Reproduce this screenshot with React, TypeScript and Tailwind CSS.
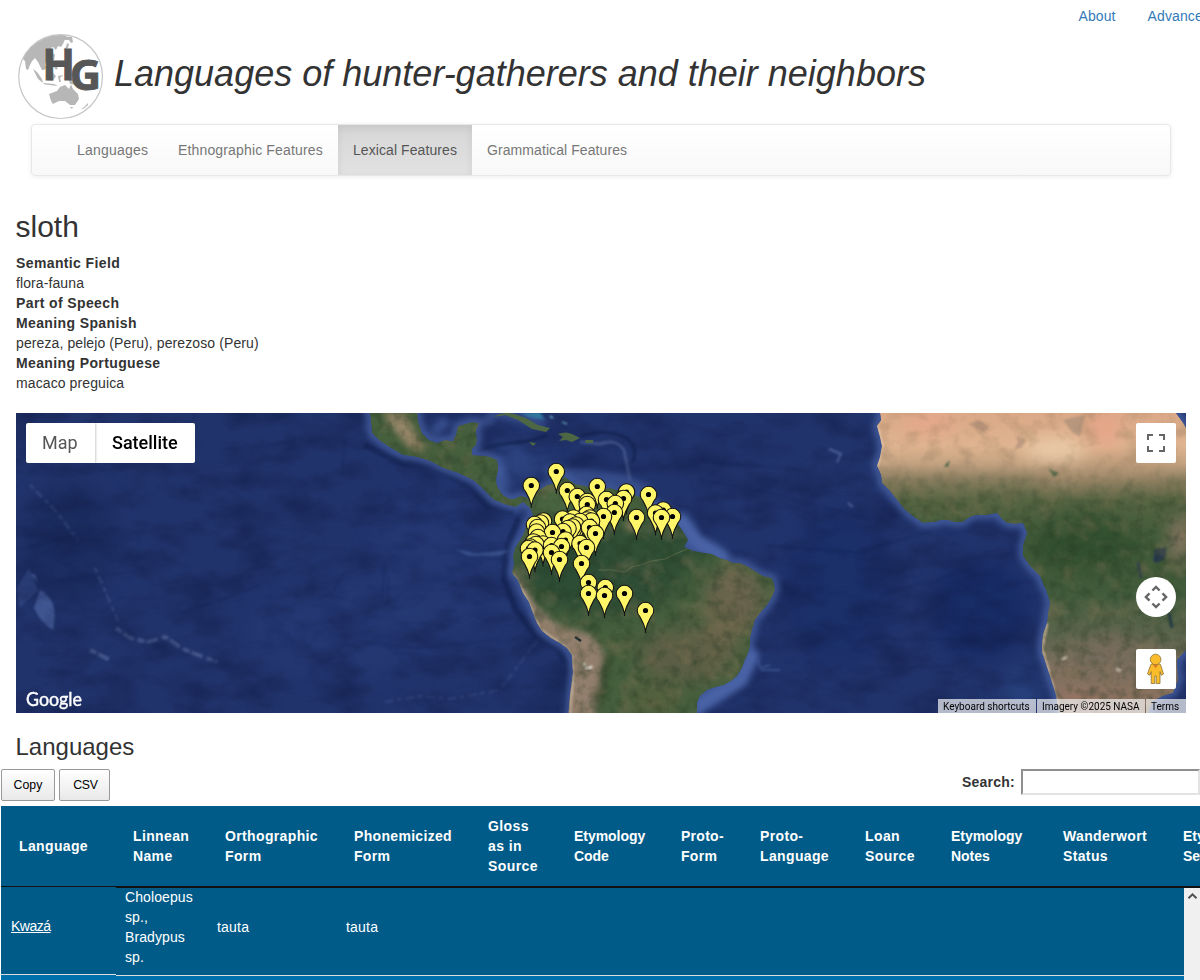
import React from "react";

const AMERICA =
  "M366 405 L370 413 L372 433 L380 441 L391 448 L403 455 L417 457 L430 461 L443 468 L458 473 L473 480 L481 487 L487 493 L494 500 L507 505 L516 507 L523 502 L530 508 L533 515 L527 523 L524 533 L520 540 L515 548 L513 556 L514 564 L512 573 L518 580 L523 593 L529 602 L533 613 L537 623 L542 631 L551 638 L560 643 L567 648 L572 655 L573 673 L570 695 L568 720 L697 720 L697 703 L700 696 L707 690 L716 687 L724 685 L731 681 L737 676 L742 668 L745 660 L749 651 L750 646 L750 638 L752 630 L755 620 L760 613 L767 605 L772 597 L775 590 L774 583 L772 578 L763 576 L755 571 L747 566 L740 563 L733 563 L727 560 L720 558 L712 554 L704 553 L693 551 L684 547 L688 540 L684 533 L677 523 L671 515 L665 510 L656 505 L647 503 L640 497 L630 493 L620 491 L610 488 L600 489 L590 487 L575 484 L565 477 L557 480 L552 484 L547 485 L541 489 L537 490 L535 496 L531 501 L526 497 L520 496 L514 499 L510 499 L503 495 L500 491 L497 486 L496 479 L498 471 L498 465 L497 460 L491 457 L485 456 L472 455 L472 449 L476 445 L477 440 L476 431 L479 423 L472 422 L458 426 L456 434 L453 441 L445 440 L437 443 L429 440 L422 433 L418 421 L417 405 Z";
const AFRICA =
  "M882 405 L880 413 L881 420 L877 426 L880 437 L882 446 L880 457 L877 466 L881 475 L882 483 L890 491 L897 500 L905 510 L914 517 L923 523 L935 522 L941 520 L947 520 L954 522 L963 522 L970 517 L977 515 L987 515 L997 513 L1002 519 L1007 523 L1015 524 L1023 523 L1027 533 L1023 545 L1023 556 L1030 566 L1040 576 L1043 584 L1046 590 L1048 596 L1050 603 L1048 613 L1047 623 L1043 634 L1042 645 L1042 652 L1046 664 L1050 676 L1056 695 L1060 720 L1146 720 L1153 701 L1163 696 L1173 693 L1178 680 L1177 660 L1190 646 L1190 436 L1184 424 L1176 413 L1172 405 Z";
const ISLANDS =
  "M494 417 Q503 411 514 414 L526 418 L538 425 L550 428 L546 432 L532 429 L518 420 L505 415 Z M558 434 Q566 431 572 434 L580 438 L572 442 L566 440 L559 441 L563 437 Z M529 442 L536 443 L533 446 Z M585 440 L593 440 L593 443 L586 443 Z";

const PINS: [number, number][] = [
  [531.3, 485.5], [556.3, 471.5], [567.3, 490.5], [577.3, 496.5], [587.3, 501.5], [587.3, 504.5],
  [597.3, 486.5], [606.5, 499.5], [626.5, 492], [623.5, 498.5], [615.3, 503.5], [614.3, 512.5],
  [603.5, 516.5], [648.5, 494.5], [636.5, 517.5], [663.3, 510], [655.5, 513], [672.5, 516.5],
  [661.5, 517.5], [562.5, 519], [543.5, 521], [534.5, 524.5], [540.5, 523], [537.5, 527.5],
  [573.5, 518], [536.5, 532], [570, 522], [580, 521.5], [586.5, 514.5], [590, 518],
  [591.5, 521], [587, 520], [572.5, 527], [576, 525], [568, 528.5], [563, 531.5], [552.5, 532.5],
  [589.5, 527.5], [595.5, 533.5], [538, 537.5], [533.5, 542], [543, 544], [536, 544.5],
  [530, 547], [528.5, 548.5], [535, 550], [529.5, 556.5], [551.5, 545.5], [565.5, 540],
  [561.5, 546.5], [551.5, 552.5], [559.5, 559.5], [580, 543.5], [586.5, 547.5],
  [581.5, 563.5], [588.5, 582.5], [588.5, 593.5], [605.3, 587.5], [604.5, 595.5], [624.5, 593.5],
  [645.5, 610.5],
];

function Logo() {
  return (
    <svg className="ml-[18px] mt-[1px] h-[86px] w-[86px] shrink-0" viewBox="18 34 86 86">
      <defs>
        <clipPath id="globe"><circle cx="60.6" cy="76.6" r="41.6" /></clipPath>
      </defs>
      <circle cx="60.6" cy="76.6" r="41.9" fill="#fff" stroke="#c6c6c6" strokeWidth="1.2" />
      <g clipPath="url(#globe)" fill="#b7b7b7">
        <path d="M18 30 L66 30 L66 37 L63 44 L61 47 L58 46 L56 50 L53 47 L51 48 L52 52 L55 55 L54 60 L50 62 L46 62 L45 65 L46 68 L44 70 L42 70 L40 66 L38 62 L35 58 L32 61 L30 65 L28 70 L26 69 L25 61 L22 58 Z" />
        <path d="M62 36 L72 37 L73 42 L71 43 L69 40 L65 40 Z M67 43 L69 44 L68 48 L63 50 L66 47 Z" />
        <path d="M33 69 L37 72 L42 79 L43 83 L38 79 L35 73 Z M43 83 L54 84 L58 86 L45 84.5 Z M46 75 L52 72 L56 76 L53 81 L47 80 Z M58 76 L63 75 L60 78 L61 82 L59 82 Z M68 77 L76 81 L81 86 L83 89 L76 85 L70 84 Z M54 61 L55 65 L58 68 L56 70 L53 66 Z" />
        <path d="M49 94 L57 91 L60 87 L65 85 L69 89 L71 84.5 L73 89 L78 94 L79 99 L75 105 L70 105 L65 101 L59 101 L53 104 L51 101 Z M70 107 L73 107 L72 109 Z" />
        <path d="M81 109 L85 106.5 L87.5 103 L88 105 L84 108.5 Z" />
      </g>
      <g fill="#575757" stroke="#575757" strokeWidth="0.9" fontFamily="Open Sans, sans-serif" fontWeight="700">
        <text x="42.2" y="79.6" fontSize="42.5" textLength="33" lengthAdjust="spacingAndGlyphs">H</text>
        <text x="69.8" y="90.2" fontSize="41.5" textLength="31.5" lengthAdjust="spacingAndGlyphs">G</text>
      </g>
    </svg>
  );
}

function Pin({ x, y }: { x: number; y: number }) {
  return (
    <g transform={`translate(${x} ${y})`}>
      <path d="M0 22.5 L0 20 C-1.2 13.5 -3.2 10.4 -5.6 6.2 A8.3 8.3 0 1 1 5.6 6.2 C3.2 10.4 1.2 13.5 0 20" fill="#fff568" stroke="#111" strokeWidth="1.1" />
      <circle r="2.6" fill="#000" />
    </g>
  );
}

function Terrain() {
  return (
    <svg className="block h-[300px] w-[1170px]" viewBox="16 413 1170 300">
      <defs>
        <filter id="b3" x="-30%" y="-30%" width="160%" height="160%" colorInterpolationFilters="sRGB"><feGaussianBlur stdDeviation="3" /></filter>
        <filter id="b9" x="-50%" y="-50%" width="200%" height="200%" colorInterpolationFilters="sRGB"><feGaussianBlur stdDeviation="9" /></filter>
        <filter id="b1" x="-30%" y="-30%" width="160%" height="160%" colorInterpolationFilters="sRGB"><feGaussianBlur stdDeviation="1.2" /></filter>
        <filter id="seaNoise" x="0" y="0" width="100%" height="100%" colorInterpolationFilters="sRGB">
          <feTurbulence type="fractalNoise" baseFrequency="0.022 0.04" numOctaves="6" seed="8" />
          <feColorMatrix values="0 0 0 0 0.06  0 0 0 0 0.10  0 0 0 0 0.26  2 0 0 0 -0.8" />
        </filter>
        <filter id="landNoise" x="0" y="0" width="100%" height="100%" colorInterpolationFilters="sRGB">
          <feTurbulence type="fractalNoise" baseFrequency="0.09" numOctaves="5" seed="3" />
          <feColorMatrix values="0 0 0 0 0.14  0 0 0 0 0.22  0 0 0 0 0.13  2.2 0 0 0 -0.95" />
        </filter>
        <filter id="sandNoise" x="0" y="0" width="100%" height="100%" colorInterpolationFilters="sRGB">
          <feTurbulence type="fractalNoise" baseFrequency="0.05" numOctaves="5" seed="14" />
          <feColorMatrix values="0 0 0 0 0.55  0 0 0 0 0.47  0 0 0 0 0.36  0 2 0 0 -0.95" />
        </filter>
        <clipPath id="am"><path d={AMERICA} /></clipPath>
        <clipPath id="af"><path d={AFRICA} /></clipPath>
        <clipPath id="land"><path d={AMERICA + AFRICA} /></clipPath>
        <linearGradient id="fade" x1="0" y1="460" x2="0" y2="510" gradientUnits="userSpaceOnUse">
          <stop offset="0" stopColor="#000" />
          <stop offset="1" stopColor="#fff" />
        </linearGradient>
        <mask id="vegetation" maskUnits="userSpaceOnUse" x="360" y="413" width="830" height="300">
          <rect x="360" y="413" width="500" height="300" fill="#fff" />
          <rect x="860" y="413" width="330" height="300" fill="url(#fade)" />
        </mask>
        <linearGradient id="afg" x1="0" y1="413" x2="0" y2="713" gradientUnits="userSpaceOnUse">
          <stop offset="0" stopColor="#dba987" />
          <stop offset=".11" stopColor="#dfb490" />
          <stop offset=".17" stopColor="#c3a281" />
          <stop offset=".22" stopColor="#8a7e60" />
          <stop offset=".29" stopColor="#566543" />
          <stop offset=".42" stopColor="#3f5a38" />
          <stop offset=".6" stopColor="#425c3b" />
          <stop offset=".74" stopColor="#5b654c" />
          <stop offset=".84" stopColor="#7d6f5e" />
          <stop offset="1" stopColor="#917462" />
        </linearGradient>
      </defs>
      <rect x="16" y="413" width="1170" height="300" fill="#21336b" />
      <g filter="url(#b9)">
        <ellipse cx="460" cy="560" rx="90" ry="70" fill="#263b76" opacity=".6" />
        <ellipse cx="340" cy="630" rx="90" ry="50" fill="#263b76" opacity=".6" />
        <ellipse cx="70" cy="540" rx="50" ry="60" fill="#1a2b5c" opacity=".7" />
        <ellipse cx="840" cy="590" rx="55" ry="80" fill="#1a2d66" opacity=".7" />
        <ellipse cx="980" cy="610" rx="50" ry="50" fill="#172a64" opacity=".8" />
        <ellipse cx="1025" cy="690" rx="22" ry="22" fill="#2b4684" opacity=".7" />
        <ellipse cx="560" cy="690" rx="25" ry="30" fill="#1d2f62" opacity=".7" />
        <ellipse cx="520" cy="460" rx="25" ry="20" fill="#344d8e" opacity=".6" />
      </g>
      <g filter="url(#b1)" fill="none">
        <path d="M365 445 L400 462 L432 467 L470 486 L488 506 L514 512 M519 518 L508 545 L504 580 L516 610 L537 636 L559 650 L567 665 L565 713" stroke="#142452" strokeWidth="6" opacity=".7" />
        <path d="M477 452 Q495 444 512 443 T548 435 M580 436 Q605 429 622 436 T633 462" stroke="#101f4a" strokeWidth="3" opacity=".6" />
        <path d="M580 442 L600 444 Q616 438 624 450 L630 480" stroke="#6d82ac" strokeWidth="3" opacity=".4" />
        <path d="M30 485 L55 510 L78 540 M95 568 L118 621" stroke="#7389bb" strokeWidth="2.5" strokeDasharray="5 3 9 4" opacity=".25" />
        <path d="M116 628 L130 638 L148 642 L165 637 L185 650 L217 662 M90 650 L110 660" stroke="#8498c4" strokeWidth="4" strokeDasharray="7 2 12 4" opacity=".35" />
        <path d="M31 575 Q35 570 38 583 M40 590 Q60 600 53 630 Q40 622 34 608 Z" fill="#5069a6" opacity=".65" />
        <path d="M16 590 L29 568 L38 590 L20 608 Z" fill="#465e9d" opacity=".4" />
        <path d="M455 549 L475 553 L510 550 L500 556 L468 556 Z" fill="#4a67a4" opacity=".55" />
        <path d="M16 550 L90 532 M55 580 L150 570 M180 614 L260 586 M320 598 L332 593 L345 572 M388 577 L388 604 M220 450 L294 442 M345 438 L342 475 M360 642 L420 648 L500 640 M385 560 L382 600 M700 480 L780 495 L870 520 M690 460 L800 470 M760 545 L860 553 L900 540 M860 550 L930 532 M880 595 L970 570 M870 638 L980 640 M870 670 L960 665" stroke="#0e1c48" strokeWidth="1.2" opacity=".35" />
        <path d="M520 413 L540 412 L545 420 L530 418 Z" fill="#2b7c9c" />
        <path d="M550 416 L553 418 M562 422 L567 424" stroke="#7cc5d1" strokeWidth="1.6" />
        <path d="M829 449 L841 454 L837 462 M848 503 L853 507" stroke="#7189ba" strokeWidth="2.5" opacity=".45" />
        <path d="M758 660 L760 668 L770 665 M760 670 L780 670" stroke="#5876b5" strokeWidth="2" opacity=".4" />
        <path d="M538 640 L515 670 L500 690 M385 702 L420 696 L450 699 L500 690" stroke="#5a70a6" strokeWidth="2.5" strokeDasharray="9 3 5 4" opacity=".25" />
      </g>
      <rect x="16" y="413" width="1170" height="300" filter="url(#seaNoise)" opacity=".5" />
      <g filter="url(#b3)" fill="none" stroke="#4963a6" strokeLinejoin="round">
        <path d={AMERICA} strokeWidth="9" opacity=".75" />
        <path d={AFRICA} strokeWidth="9" opacity=".8" />
        <path d="M682 520 L697 541 L722 556 M700 706 L722 692 L741 680 L752 656" strokeWidth="14" strokeLinecap="round" />
        <path d="M433 433 L447 420 M485 425 L495 412 L545 424 M545 470 L625 480 L650 492 M500 465 L507 488" strokeWidth="10" opacity=".55" />
      </g>

      <g clipPath="url(#am)">
        <path d={AMERICA} fill="#465f3d" />
        <g filter="url(#b9)">
          <ellipse cx="600" cy="570" rx="85" ry="45" fill="#2e4d35" />
          <ellipse cx="660" cy="545" rx="50" ry="28" fill="#304f35" />
          <ellipse cx="735" cy="600" rx="30" ry="33" fill="#6a644d" />
          <ellipse cx="685" cy="655" rx="48" ry="28" fill="#5c5f45" />
          <ellipse cx="722" cy="635" rx="18" ry="30" fill="#666349" />
          <ellipse cx="655" cy="700" rx="25" ry="18" fill="#54613f" />
          <ellipse cx="560" cy="500" rx="25" ry="12" fill="#4a6742" />
        </g>
        <g filter="url(#b3)">
          <path d="M508 565 L520 578 L538 608 L560 626 L592 635 L607 658 L600 685 L597 720 L560 720 L565 660 L520 610 Z" fill="#927f6d" />
          <path d="M385 413 L405 413 L414 430 L424 448 L415 452 L395 432 Z" fill="#948568" />
          <ellipse cx="630" cy="526" rx="5" ry="6" fill="#7e7556" />
          <path d="M604 655 L612 655 L603 705 L594 715 Z" fill="#3b4e31" />
        </g>
        <path d="M513 575 L525 596 L540 629 L560 643 L572 655 L573 680 L570 713" stroke="#cdbba7" strokeWidth="2" fill="none" filter="url(#b1)" />
        <path d="M583 663 l3 2 M585 668 l5 0 l2 -2" stroke="#e9e4dd" strokeWidth="2.5" filter="url(#b1)" />
        <path d="M575 637 l6 4" stroke="#1f2d33" strokeWidth="2.2" />
        <path d="M598 570 L612 570 L625 572 L632 567 L640 565 L652 561 L665 559 L673 555 L680 552 L692 547" stroke="#75805c" strokeWidth="1.1" fill="none" opacity=".55" />
      </g>
      <path d={ISLANDS} fill="#4d6643" />

      <g clipPath="url(#af)">
        <path d={AFRICA} fill="url(#afg)" />
        <g filter="url(#b9)">
          <path d="M910 413 L960 413 L950 432 L905 435 Z" fill="#e5a88a" />
          <path d="M1085 413 L1120 413 L1115 450 L1085 440 Z" fill="#e8a487" opacity=".8" />
          <ellipse cx="1055" cy="450" rx="32" ry="11" fill="#ebccab" />
          <ellipse cx="1085" cy="545" rx="52" ry="27" fill="#32502f" />
          <ellipse cx="1110" cy="655" rx="35" ry="20" fill="#776c5d" />
          <ellipse cx="1180" cy="540" rx="10" ry="24" fill="#937a69" />
          <path d="M1030 473 L1170 450 L1165 475 L1050 486 Z" fill="#b79675" opacity=".6" />
          <ellipse cx="1085" cy="706" rx="25" ry="10" fill="#a1776a" />
        </g>
        <g filter="url(#b1)">
          <path d="M1063 420 L1075 417 L1085 415 L1080 437 L1072 432 Z" fill="#9f8875" opacity=".6" />
          <path d="M1016 436 L1026 440 L1022 447 L1014 450 L1018 442 Z M968 424 L980 420 L990 428 L983 432 Z" fill="#a28372" opacity=".55" />
          <path d="M1048 468 L1053 471 L1059 473 L1054 477 Z M944 466 L950 460 L948 467 Z" fill="#4a6546" />
          <path d="M1155 549 L1166 548 L1165 559 L1156 563 L1153 560 Z" fill="#24374c" />
          <path d="M1138 562 L1141 578 M1169 613 L1172 628" stroke="#1e3448" strokeWidth="2.6" />
          <path d="M1062 659 l5 -2 M1116 669 l5 2" stroke="#dcd4c8" strokeWidth="2.2" />
          <path d="M1047 623 L1042 648 L1050 676 L1060 713" stroke="#d3b79e" strokeWidth="2.5" fill="none" />
          <path d="M877 423 L882 446 L877 466" stroke="#eccbab" strokeWidth="2.5" fill="none" />
        </g>
      </g>
      <g clipPath="url(#land)">
        <g mask="url(#vegetation)">
          <rect x="360" y="413" width="830" height="300" filter="url(#landNoise)" opacity=".42" />
        </g>
        <rect x="360" y="413" width="830" height="300" filter="url(#sandNoise)" opacity=".45" />
      </g>
      {[...PINS].sort((a, b) => a[1] - b[1]).map(([x, y], i) => <Pin key={i} x={x} y={y} />)}
      <text x="26" y="705.5" fill="#fff" stroke="#fff" strokeWidth=".4" fontFamily="Lato, sans-serif" fontSize="18.5" textLength="56" lengthAdjust="spacingAndGlyphs">Google</text>
    </svg>
  );
}

function MapPanel() {
  return (
    <div className="relative ml-4 mt-5 h-[300px] w-[1170px] overflow-hidden tracking-normal">
      <Terrain />
      <div className="absolute left-[10px] top-[10px] flex h-10 overflow-hidden rounded-[2px] bg-white font-[Roboto,sans-serif] text-[18px] leading-10">
        <div className="w-[69px] pl-[16px] text-[#565656] shadow-[1px_0_2px_rgba(0,0,0,0.2)]">Map</div>
        <div className="w-[100px] pl-[17px] font-medium text-black">Satellite</div>
      </div>
      <div className="absolute right-[10px] top-[10px] h-10 w-10 rounded-[2px] bg-white p-[11px]">
        <svg className="block" width="18" height="18" fill="none" stroke="#666" strokeWidth="2"><path d="M1 6V1H6M12 1H17V6M17 12V17H12M6 17H1V12" /></svg>
      </div>
      <div className="absolute right-[10px] top-[164px] h-10 w-10 rounded-full bg-white">
        <svg className="block" width="40" height="40" fill="none" stroke="#666" strokeWidth="2.4"><path d="M16.4 13.5 20 9.9l3.6 3.6M16.4 26.5 20 30.1l3.6-3.6M13.5 16.4 9.9 20l3.6 3.6M26.5 16.4 30.1 20l-3.6 3.6" /></svg>
      </div>
      <div className="absolute right-[10px] top-[236px] h-10 w-10 rounded-[2px] bg-white">
        <svg className="block" width="40" height="40" fill="#fbbc2b" stroke="#8a7137" strokeWidth=".8">
          <path d="M14.8 15.5 Q16 14.7 19.5 14.7 Q23 14.7 24.5 15.5 L27.5 25 L25.3 26.2 L24 22.5 V34.5 H20.2 V27 H18.8 V34.5 H15.2 V22.5 L14 26.2 L11.5 25 Z" />
          <path d="M16.7 15 H22.5 L19.6 19.5Z" fill="#e17a26" stroke="none" />
          <circle cx="19.6" cy="10.5" r="5.3" />
        </svg>
      </div>
      <div className="absolute bottom-0 right-0 flex h-[14px] gap-px font-[Roboto,sans-serif] text-[10px] leading-[15px] text-black">
        <span className="w-[98px] whitespace-nowrap bg-[#f5f5f5]/70 pl-[5px]">Keyboard shortcuts</span>
        <span className="w-[108px] whitespace-nowrap bg-[#f5f5f5]/70 pl-[5px]">Imagery ©2025 NASA</span>
        <span className="w-[40px] whitespace-nowrap bg-[#f5f5f5]/70 pl-[5px]">Terms</span>
      </div>
    </div>
  );
}

function Field({ label, value }: { label: string; value?: string }) {
  return (
    <>
      <dt className="font-bold tracking-[0.38px]">{label}</dt>
      {value && <dd>{value}</dd>}
    </>
  );
}

const HEADERS = [
  ["w-[115px] tracking-[0.36px]", "Language"], ["w-[92px] tracking-[0.36px]", "Linnean\nName"], ["w-[129px] tracking-[0.36px]", "Orthographic\nForm"],
  ["w-[134px] tracking-[0.32px]", "Phonemicized\nForm"], ["w-[86px] tracking-[0.4px]", "Gloss\nas in\nSource"], ["w-[107px] tracking-[-0.05px]", "Etymology\nCode"],
  ["w-[79px] tracking-[0.28px]", "Proto-\nForm"], ["w-[105px] tracking-[0.36px]", "Proto-\nLanguage"], ["w-[86px] tracking-[0.4px]", "Loan\nSource"],
  ["w-[112px] tracking-[-0.05px]", "Etymology\nNotes"], ["w-[120px] tracking-[0.36px]", "Wanderwort\nStatus"], ["w-[110px] tracking-[-0.05px]", "Etymology\nSet"],
];

function LanguageTable() {
  return (
    <div className="ml-px mt-[5px] w-[1199px] overflow-hidden text-white">
      <div className="flex h-[80px] w-[1300px] bg-[#005b88] font-bold">
        {HEADERS.map(([w, t], i) => (
          <div key={i} className={`${w} flex shrink-0 items-center whitespace-pre ${i ? "pl-[17px]" : "pl-[18px]"}`}>{t}</div>
        ))}
      </div>
      <div className="flex h-[94px]">
        <div className="w-[115px] shrink-0 bg-[#0070ad]">
          <div className="flex h-[89px] items-center border-b border-t border-b-[#ddd] border-t-[#111] bg-[#005b88] pb-[10px] pl-[10px]">
            <a className="tracking-[-0.5px] underline">Kwazá</a>
          </div>
        </div>
        <div className="w-[1068px] shrink-0 border-t-2 border-[#111] bg-[#0070ad]">
          <div className="flex h-[88px] border-b border-[#ddd] bg-[#005b88]">
            <div className="-mt-px w-[92px] whitespace-pre pl-[9px]">{"Choloepus\nsp.,\nBradypus\nsp."}</div>
            <div className="flex w-[129px] items-center pb-[10px] pl-[9px] tracking-[0.2px]">tauta</div>
            <div className="flex items-center pb-[10px] pl-[9px] tracking-[0.2px]">tauta</div>
          </div>
        </div>
        <div className="w-[16px] border-t-2 border-[#111] bg-[#f0f0f0]">
          <svg className="block" width="16" height="17" fill="none" stroke="#505050" strokeWidth="2"><path d="M4.5 10.3 8.5 6.3l4 4" /></svg>
        </div>
      </div>
    </div>
  );
}

export default function App() {
  return (
    <div className="h-[980px] w-[1200px] overflow-hidden bg-white font-['Liberation_Sans',Arial,sans-serif] text-[14px] leading-5 tracking-[0.1px] text-[#333]">
      <div className="flex h-[33px] gap-[32px] whitespace-nowrap pl-[1078.5px] pt-[6px] text-[#337ab7]">
        <a>About</a>
        <a>Advanced Search</a>
      </div>
      <header className="flex h-[91px]">
        <Logo />
        <h1 className="ml-[10px] mt-[21px] whitespace-nowrap text-[36px] italic leading-10 tracking-normal">Languages of hunter-gatherers and their neighbors</h1>
      </header>
      <nav className="ml-[31px] flex h-[52px] w-[1140px] rounded-[4px] border border-[#e7e7e7] bg-linear-to-b from-white to-[#f8f8f8] pl-[30px] text-[#777] shadow-[0_1px_5px_rgba(0,0,0,0.075)]">
        <a className="w-[101px] p-[15px] tracking-[0.2px]">Languages</a>
        <a className="w-[175px] whitespace-nowrap p-[15px] tracking-[0.15px]">Ethnographic Features</a>
        <a className="w-[134px] whitespace-nowrap bg-linear-to-b from-[#d6d6d6] to-[#e2e2e2] p-[15px] tracking-[0.08px] text-[#555] shadow-[inset_0_3px_9px_rgba(0,0,0,0.075)]">Lexical Features</a>
        <a className="p-[15px] tracking-[0.08px]">Grammatical Features</a>
      </nav>
      <main>
        <h2 className="ml-[15.5px] mt-[34px] text-[30px] leading-[33px] tracking-normal">sloth</h2>
        <dl className="ml-4 mt-[10px]">
          <Field label="Semantic Field" value="flora-fauna" />
          <Field label="Part of Speech" />
          <Field label="Meaning Spanish" value="pereza, pelejo (Peru), perezoso (Peru)" />
          <Field label="Meaning Portuguese" value="macaco preguica" />
        </dl>
        <MapPanel />
        <h3 className="ml-[15.5px] mt-[21px] text-[24px] leading-[26px] tracking-normal">Languages</h3>
        <div className="mt-[9px] flex h-8 items-start pl-px">
          <button className="h-8 w-[54px] rounded-[2px] border border-[#999] bg-linear-to-b from-white to-[#e9e9e9] text-[12.3px] text-black">Copy</button>
          <button className="ml-1 h-8 w-[51px] rounded-[2px] border border-[#999] bg-linear-to-b from-white to-[#e9e9e9] pl-[2px] text-[12.3px] tracking-[-0.2px] text-black">CSV</button>
          <label className="ml-[852px] mt-[3px] font-bold tracking-[0.2px]">Search:</label>
          <input className="ml-auto h-[26px] w-[179px] border-2 border-b-[#e3e3e3] border-l-[#8f8f8f] border-r-[#e3e3e3] border-t-[#8f8f8f] bg-white" />
        </div>
        <LanguageTable />
      </main>
    </div>
  );
}
